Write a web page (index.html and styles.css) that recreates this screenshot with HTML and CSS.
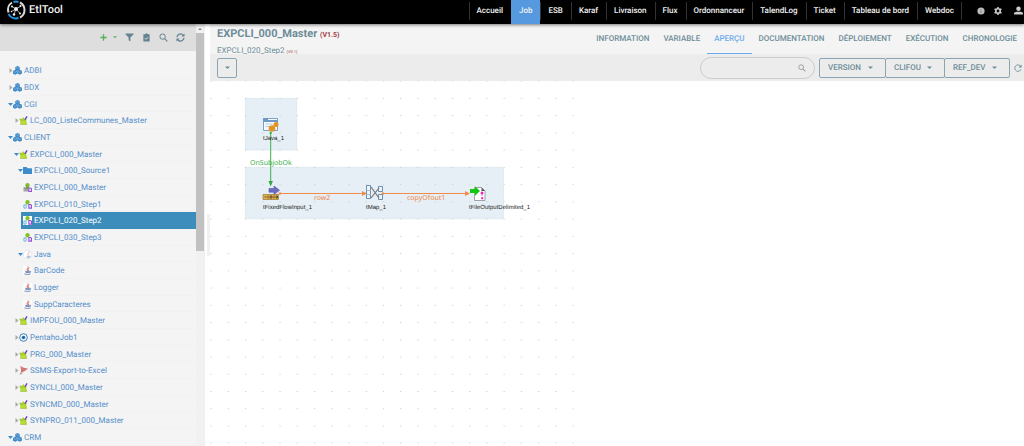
FILE: index.html
```html
<!DOCTYPE html>
<html lang="fr">
<head>
<meta charset="utf-8">
<title>EtlTool</title>
<link rel="stylesheet" href="styles.css">
</head>
<body>
<svg class="sprite" aria-hidden="true">
  <symbol id="cubes" viewBox="0 0 20 20"><g fill="#3f8ac8"><path d="M10 0l5 2.300v6L10 11 5 8.300v-6z"/><path d="M5 8.500l5 2.300v6L5 19.500 0 17v-6z"/><path d="M15 8.500l5 2.300v6l-5 2.700-5-2.700v-6z"/></g><path d="M6 3l4 2 4-2M1 12l4 2 4-2M11 12l4 2 4-2" fill="none" stroke="#b4d2ec" stroke-width="1"/></symbol>
  <symbol id="job" viewBox="0 0 20 20"><path d="M1 6h6l2-4 3 4h5l-1 5 2 8H3V12z" fill="#a9cf2e"/><path d="M5 12h9v5H5z" fill="#bfe03c"/><path d="M1 7l4 1M3 19h14" stroke="#8fb53a" stroke-width="1.200"/><path d="M13 8l5-7" fill="none" stroke="#6238d4" stroke-width="3"/></symbol>
  <symbol id="step" viewBox="0 0 20 20"><path d="M10 5L4 14M10 5l6 9" stroke="#9ab" stroke-width="1.500"/><circle cx="10" cy="5" r="4.800" fill="#7ec51e"/><path d="M2 11h5v7H2z" fill="#eaf7ff" stroke="#5ba8e0" stroke-width="1.800"/><path d="M13 10h4l2 2v6h-6z" fill="#eee0ff" stroke="#9250dc" stroke-width="2.400"/></symbol>
  <symbol id="stepgrey" viewBox="0 0 20 20"><path d="M1 9h12v10H1z" fill="#aaa"/><path d="M3 12h8M3 15h8" stroke="#888"/><circle cx="10" cy="5" r="4.800" fill="#7bbd2b"/><path d="M7 8h6v5H7z" fill="#6f9f42"/><path d="M13 11h4l2 2v6h-6z" fill="#eee0ff" stroke="#9250dc" stroke-width="2.400"/></symbol>
  <symbol id="java" viewBox="0 0 20 20"><path d="M0 0h20v20H0z" fill="#fff" opacity=".7"/><path d="M11 1c3 3-5 5-1 10M14 4c-4 2-3 4-1 7" fill="none" stroke="#d8574c" stroke-width="1.900"/><path d="M5 12h10M6 14.500h8M3 17.500c4 1.500 10 1.500 14 0M15 12c4-1 3 3-1 3" fill="none" stroke="#5272ac" stroke-width="1.800"/></symbol>
  <symbol id="cup" viewBox="0 0 20 20"><circle cx="10" cy="10" r="9" fill="#fff" stroke="#ccd" stroke-width=".8"/><path d="M13 3c3 4-5 5-1 9" fill="none" stroke="#e0776f" stroke-width="1.400"/><path d="M8 14h9M9 17h6" stroke="#7690be" stroke-width="1.500"/></symbol>
  <symbol id="pentaho" viewBox="0 0 20 20"><circle cx="10" cy="10" r="8.500" fill="#eef7ff" stroke="#2d76ae" stroke-width="2"/><circle cx="10" cy="10" r="4" fill="#2d76ae"/><circle cx="10" cy="10" r="1.500" fill="#174e80"/></symbol>
  <symbol id="ssms" viewBox="0 0 20 20"><path d="M3 0l7 4 10 2-7 5-7 3-4 6 3-10z" fill="#cf6a66"/><path d="M5 2l5 7 8-2" stroke="#e6a8a5" stroke-width="1" fill="none"/><path d="M1 19l8-4" stroke="#999" stroke-width="1.500"/></symbol>
  <symbol id="folder" viewBox="0 0 20 20"><path d="M0 3q0-1 1-1h7l2 3h9q1 0 1 1v11q0 1-1 1H1q-1 0-1-1z" fill="#3f8ccc"/></symbol>
  <symbol id="right" viewBox="0 0 10 10"><path d="M3 0l6 5-6 5z" fill="#aaa"/></symbol>
  <symbol id="down" viewBox="0 0 10 10"><path d="M0 2h10L5 8z" fill="#3f8ccc"/></symbol>
  <symbol id="caret" viewBox="0 0 10 10"><path d="M0 3h10L5 8z" fill="currentColor"/></symbol>
  <symbol id="search" viewBox="0 0 20 20"><circle cx="8" cy="8" r="6" fill="none" stroke="currentColor" stroke-width="2.200"/><path d="M12.500 12.500l6 6" stroke="currentColor" stroke-width="2.600"/></symbol>
</svg>

<header class="topbar">
  <a class="brand" href="#">
    <svg class="logo" viewBox="0 0 40 40" aria-hidden="true"><g fill="none" stroke-width="4"><path d="M5 25A17 17 0 0 1 12 5" stroke="#d8d8d8"/><path d="M15 4a17 17 0 0 1 10 0" stroke="#2196e0"/><path d="M28 5a17 17 0 0 1 0 30" stroke="#d8d8d8"/><path d="M25 36A17 17 0 0 1 5 28" stroke="#2196e0"/></g><path d="M20 18l-8-5M20 18l10-6M20 18l-4 11M20 18l8 9M20 18l-9 5" stroke="#ddd" stroke-width="1.500"/><g fill="#eee"><circle cx="20" cy="18" r="4"/><circle cx="12" cy="13" r="2"/><circle cx="29" cy="12" r="2"/><circle cx="16" cy="29" r="2.500"/><circle cx="28" cy="27" r="2"/><circle cx="11" cy="23" r="1.500"/></g></svg>
    <span>EtlTool</span>
  </a>
  <nav class="menu">
    <a href="#">Accueil</a><a href="#" class="active">Job</a><a href="#">ESB</a><a href="#">Karaf</a><a href="#">Livraison</a><a href="#">Flux</a><a href="#">Ordonnanceur</a><a href="#">TalendLog</a><a href="#">Ticket</a><a href="#">Tableau de bord</a><a href="#">Webdoc</a>
  </nav>
  <div class="user-tools">
    <button aria-label="Informations"><svg viewBox="0 0 20 20"><circle cx="10" cy="10" r="9" fill="#bbb"/><path d="M10 5v2M10 9v6" stroke="#777" stroke-width="2"/></svg></button>
    <button aria-label="Paramètres"><svg viewBox="0 0 20 20"><circle cx="10" cy="10" r="5.500" fill="none" stroke="#ccc" stroke-width="4"/><path d="M10 0v4M10 16v4M1.500 5l3.500 2M15 13l3.500 2M1.500 15L5 13M15 7l3.500-2" stroke="#ccc" stroke-width="4"/></svg></button>
    <button class="account" aria-label="Compte"><svg viewBox="0 0 20 20"><circle cx="10" cy="6" r="5" fill="#ccc"/><path d="M0 19v-3c0-4 20-4 20 0v3z" fill="#ccc"/></svg></button>
  </div>
</header>

<div class="workspace">
  <aside class="sidebar">
    <div class="side-body">
      <div class="side-tools">
        <button class="add" aria-label="Ajouter"><svg viewBox="0 0 20 20"><path d="M10 3v14M3 10h14" stroke="currentColor" stroke-width="3"/></svg><svg class="tiny"><use href="#caret"/></svg></button>
        <button aria-label="Filtrer"><svg viewBox="0 0 20 20"><path d="M1 1h18v2l-7 7v9l-4-3v-6L1 3z" fill="currentColor"/></svg></button>
        <button aria-label="Valider"><svg viewBox="0 0 20 20"><path d="M3 3h4q3-5 6 0h4v16H3z" fill="currentColor"/><path d="M6 11l3 3 5-5" fill="none" stroke="#dedede" stroke-width="2"/></svg></button>
        <button aria-label="Rechercher"><svg><use href="#search"/></svg></button>
        <button aria-label="Actualiser"><svg viewBox="0 0 20 20"><path d="M2 9a8 8 0 0 1 14-4M18 11a8 8 0 0 1-14 4" fill="none" stroke="currentColor" stroke-width="2.600"/><path d="M19 1v7h-7zM1 19v-7h7z" fill="currentColor"/></svg></button>
      </div>
      <ul class="tree">
        <li class="l1"><a href="#"><svg class="tw"><use href="#right"/></svg><svg><use href="#cubes"/></svg><span>ADBI</span></a></li>
        <li class="l1"><a href="#"><svg class="tw"><use href="#right"/></svg><svg><use href="#cubes"/></svg><span>BDX</span></a></li>
        <li class="l1"><a href="#"><svg class="tw"><use href="#down"/></svg><svg><use href="#cubes"/></svg><span>CGI</span></a></li>
        <li class="l2"><a href="#"><svg class="tw"><use href="#right"/></svg><svg><use href="#job"/></svg><span>LC_000_ListeCommunes_Master</span></a></li>
        <li class="l1"><a href="#"><svg class="tw"><use href="#down"/></svg><svg><use href="#cubes"/></svg><span>CLIENT</span></a></li>
        <li class="l2"><a href="#"><svg class="tw"><use href="#down"/></svg><svg><use href="#job"/></svg><span>EXPCLI_000_Master</span></a></li>
        <li class="l3"><a href="#"><svg class="tw"><use href="#down"/></svg><svg><use href="#folder"/></svg><span>EXPCLI_000_Source1</span></a></li>
        <li class="l4"><a href="#"><svg><use href="#stepgrey"/></svg><span>EXPCLI_000_Master</span></a></li>
        <li class="l4"><a href="#"><svg><use href="#step"/></svg><span>EXPCLI_010_Step1</span></a></li>
        <li class="l4 selected"><a href="#"><svg><use href="#step"/></svg><span>EXPCLI_020_Step2</span></a></li>
        <li class="l4"><a href="#"><svg><use href="#step"/></svg><span>EXPCLI_030_Step3</span></a></li>
        <li class="l3"><a href="#"><svg class="tw"><use href="#down"/></svg><svg><use href="#cup"/></svg><span>Java</span></a></li>
        <li class="l4"><a href="#"><svg><use href="#java"/></svg><span>BarCode</span></a></li>
        <li class="l4"><a href="#"><svg><use href="#java"/></svg><span>Logger</span></a></li>
        <li class="l4"><a href="#"><svg><use href="#java"/></svg><span>SuppCaracteres</span></a></li>
        <li class="l2"><a href="#"><svg class="tw"><use href="#right"/></svg><svg><use href="#job"/></svg><span>IMPFOU_000_Master</span></a></li>
        <li class="l2"><a href="#"><svg class="tw"><use href="#right"/></svg><svg><use href="#pentaho"/></svg><span>PentahoJob1</span></a></li>
        <li class="l2"><a href="#"><svg class="tw"><use href="#right"/></svg><svg><use href="#job"/></svg><span>PRG_000_Master</span></a></li>
        <li class="l2"><a href="#"><svg class="tw"><use href="#right"/></svg><svg><use href="#ssms"/></svg><span>SSMS-Export-to-Excel</span></a></li>
        <li class="l2"><a href="#"><svg class="tw"><use href="#right"/></svg><svg><use href="#job"/></svg><span>SYNCLI_000_Master</span></a></li>
        <li class="l2"><a href="#"><svg class="tw"><use href="#right"/></svg><svg><use href="#job"/></svg><span>SYNCMD_000_Master</span></a></li>
        <li class="l2"><a href="#"><svg class="tw"><use href="#right"/></svg><svg><use href="#job"/></svg><span>SYNPRO_011_000_Master</span></a></li>
        <li class="l1"><a href="#"><svg class="tw"><use href="#down"/></svg><svg><use href="#cubes"/></svg><span>CRM</span></a></li>
      </ul>
    </div>
    <div class="scrollbar"><svg viewBox="0 0 8 9"><path d="M2 6h4L4 4z" fill="#888"/></svg><div class="thumb"></div></div>
  </aside>
  <div class="splitter"><span></span></div>

  <main class="content">
    <div class="page-head">
      <div class="titles">
        <h1>EXPCLI_000_Master <small>(V1.5)</small></h1>
        <h2>EXPCLI_020_Step2 <small>(V0.1)</small></h2>
      </div>
      <nav class="tabs">
        <a href="#">INFORMATION</a><a href="#">VARIABLE</a><a href="#" class="active">APERÇU</a><a href="#">DOCUMENTATION</a><a href="#">DÉPLOIEMENT</a><a href="#">EXÉCUTION</a><a href="#">CHRONOLOGIE</a>
      </nav>
    </div>
    <div class="toolbar">
      <button class="more" aria-label="Actions"><svg><use href="#caret"/></svg></button>
      <label class="search"><input type="text" aria-label="Rechercher"><svg><use href="#search"/></svg></label>
      <div class="filters">
        <label class="pick"><select aria-label="Version"><option>VERSION</option></select><svg><use href="#caret"/></svg></label>
        <label class="pick"><select aria-label="Client"><option>CLIFOU</option></select><svg><use href="#caret"/></svg></label>
        <label class="pick"><select aria-label="Référence"><option>REF_DEV</option></select><svg><use href="#caret"/></svg></label>
      </div>
      <button class="reload" aria-label="Recharger"><svg viewBox="0 0 20 20"><path d="M16 5a8 8 0 1 0 1.500 8" fill="none" stroke="currentColor" stroke-width="2.200"/><path d="M19 1v8h-8z" fill="currentColor"/></svg></button>
    </div>
    <div class="canvas">
      <svg class="diagram" width="364" height="365" viewBox="210 81 364 365">
        <defs>
          <pattern id="dots" x="210.500" y="80.700" width="17.240" height="17.240" patternUnits="userSpaceOnUse"><path d="M0 0h1.200v1H0z" fill="#c9cdd0"/></pattern>
        </defs>
        <g fill="#e6eff5" stroke="#d5e2ea" stroke-width=".6"><path d="M245.300 98.300h51.400v51.700h-51.400z"/><path d="M245.300 167.300h258.200v51.500H245.300z"/></g>
        <path d="M210 81h364v365H210z" fill="url(#dots)"/>
        <g stroke="#f08b4b"><path d="M280 193.500h84M383 193.500h85"/></g>
        <g fill="#f08b4b"><path d="M362 191l5 2.500-5 2.500zM465 191l5 2.500-5 2.500z"/><circle cx="280" cy="193.500" r="1.300"/><circle cx="383" cy="193.500" r="1.300"/></g>

        <g><path d="M263.500 118.500h14v12h-14z" fill="#f6faff" stroke="#7da0c6"/><path d="M263 118h5v2h10v2h-15z" fill="#6d98c8"/><path d="M265.500 124h7M265.500 126.500h5" stroke="#b4cbe2"/><circle cx="272" cy="128.500" r="3.300" fill="#e39320"/><circle cx="276" cy="124.500" r="2.500" fill="#e39320"/></g>
        <path d="M270.700 133v50" stroke="#3fb14d"/><path d="M268.500 181h4.400l-2.200 5.500z" fill="#2fa83f"/><circle cx="270.700" cy="133" r="1.200" fill="#3fb14d"/>

        <g><path d="M269 188.500h5V186l5.500 4.300-5.500 4.300v-2.400h-5z" fill="#6c6cc4" stroke="#5656a8" stroke-width=".6"/><path d="M263 194.500h15.500v5H263z" fill="#e3b350" stroke="#8d6728" stroke-width=".6"/><path d="M264.500 197h2M268 195.500v3M270 196h2v2h-2zM274 195.500v3M276 196h1.500v2H276z" fill="none" stroke="#49351a" stroke-width=".8"/></g>

        <g fill="#edf4fa" stroke="#6b8fae"><path d="M366.500 185.500h4v13h-4zM378.500 186.500h4v5h-4zM378.500 194.500h4v5h-4z"/><path d="M366.500 190.500h4M366.500 194.500h4" stroke="#a8c0d4"/><path d="M371 187l8 11M371 198l8-10" fill="none" stroke="#777" stroke-width="1.200"/></g>

        <g><path d="M474.500 187.500h7l3.500 3.500v9.500h-10.500z" fill="#fff" stroke="#8a8a96" stroke-width=".8"/><path d="M481.500 187.500v3.500h3.500z" fill="#555"/><path d="M481 192h2v2h-2zM481 195h2M481.500 197.500h1.500v1.500h-1.500z" stroke="#ef22bd" fill="#ef22bd" stroke-width=".6"/><path d="M470 189h5v-2.700l5 4.700-5 4.700V193h-5z" fill="#12c812"/></g>

        <g class="node-label"><text x="263" y="140">tJava_1</text><text x="263" y="209">tFixedFlowInput_1</text><text x="366" y="209">tMap_1</text><text x="469" y="209">tFileOutputDelimited_1</text></g>
        <g class="link-label"><text class="ok" x="250" y="165">OnSubjobOk</text><text x="314" y="200">row2</text><text x="407" y="200">copyOfout1</text></g>
      </svg>
    </div>
  </main>
</div>
</body>
</html>
```

FILE: styles.css
```css
* { box-sizing: border-box; }
html, body { height: 100%; }
body {
  margin: 0;
  display: flex;
  flex-direction: column;
  overflow: hidden;
  background: #fff;
  color: #6d8c98;
  font: 8px/16px Roboto, "Noto Sans", sans-serif;
  text-rendering: geometricPrecision;
}
a { color: inherit; text-decoration: none; }
button { display: flex; align-items: center; justify-content: center; border: 0; padding: 0; background: none; color: inherit; }
svg { flex: none; width: 9px; height: 9px; }
.sprite { position: absolute; width: 0; height: 0; }

.topbar {
  position: relative;
  z-index: 2;
  display: flex;
  align-items: stretch;
  height: 24px;
  flex: none;
  background: #000;
  color: #f2f2f2;
  box-shadow: 0 1px 3px rgba(0, 0, 0, .5);
}
.brand { display: flex; align-items: center; gap: 3px; margin: 0 auto 4px 6px; font-size: 11px; font-weight: 500; }
.logo { width: 20px; height: 20px; }
.menu { display: flex; font-weight: 500; line-height: 21px; }
.menu a { position: relative; padding: 0 8px; }
.menu a::before, .menu a:last-child::after { content: ""; position: absolute; left: 0; top: 2px; bottom: 4px; width: 1px; background: #333; }
.menu a:last-child::after { left: auto; right: 0; }
.menu .active { background: #5699df; }
.menu .active::before { display: none; }
.user-tools { display: flex; align-items: center; gap: 9px; padding: 0 1px 3px 15px; }
.user-tools svg { width: 8px; height: 8px; }
.user-tools .account { margin-left: 3px; }
.user-tools .account svg { width: 9px; height: 9px; }

.workspace { display: flex; flex: 1; min-height: 0; }
.sidebar { display: flex; flex: none; width: 204px; background: #f4f4f4; }
.side-body { flex: 1; overflow: hidden; }
.side-tools { display: flex; align-items: center; justify-content: flex-end; gap: 8px; height: 27px; padding: 0 11px 1px 0; background: #dedede; color: #638391; }
.side-tools .add { gap: 5px; color: #59b159; }
.side-tools svg { width: 9px; height: 9px; }
.side-tools svg.tiny { width: 4px; height: 4px; }
.tree { margin: 11px 0 0; padding: 0; list-style: none; color: #558fca; }
.tree li { height: 17px; border-bottom: 1px solid #f1f1f1; }
.tree li:nth-child(3n) { height: 16px; }
.tree a { display: flex; align-items: center; height: 17px; line-height: 17px; }
.tree span { margin-left: 2px; }
.tree .tw { width: 5px; height: 5px; }
.l1 { margin-left: 8px; }
.l2 { margin-left: 14px; }
.l3 { margin-left: 18px; }
.l4 { margin-left: 21px; padding-left: 2px; }
.tree .selected { border-color: #3c8dbc; background: #3c8dbc; color: #fff; }
.selected svg { background: #fff; }
.scrollbar { width: 8px; background: #f1f1f1; }
.scrollbar svg { display: block; width: 8px; height: 9px; }
.thumb { height: 218px; background: #c1c1c1; }
.splitter { display: flex; align-items: center; justify-content: flex-end; flex: none; width: 6px; border-left: 1px solid #eee; }
.splitter span { width: 3px; height: 42px; background: #f0f0f0; }

.content { display: flex; flex: 1; flex-direction: column; min-width: 0; }
.page-head { display: flex; justify-content: space-between; flex: none; height: 30px; padding: 0 0 0 7px; background: #f4f4f4; }
.titles { white-space: nowrap; }
h1, h2 { margin: 0; font-weight: 400; }
h1 { font-size: 11px; line-height: 19px; font-weight: 700; }
h2 { font-size: 8px; line-height: 11px; }
small { color: #a03c46; }
h1 small { font-size: 7px; }
h2 small { font-size: 4px; }
.tabs { display: flex; font-weight: 500; line-height: 29px; }
.tabs a { padding: 0 7px; border-bottom: 1px solid transparent; white-space: nowrap; }
.tabs .active { border-color: #6eabee; color: #6eabee; }
.toolbar { display: flex; align-items: center; flex: none; height: 27px; padding: 0 2px 0 7px; background: #ececec; }
.more { width: 20px; height: 20px; border: 1px solid #8aa5b1; border-radius: 2px; }
.more svg { width: 5px; height: 5px; }
.search { display: flex; align-items: center; width: 115px; height: 22px; margin-left: auto; margin-right: 4px; padding: 0 8px; border: 1px solid #ccc; border-radius: 11px; color: #999; }
.search input { flex: 1; min-width: 0; height: 16px; border: 0; padding: 0; background: none; font: inherit; outline: none; }
.search svg { width: 8px; height: 8px; }
.filters { display: flex; }
.pick { display: grid; align-items: center; height: 20px; border: 1px solid #8aa5b1; border-radius: 2px; font-weight: 500; }
.pick + .pick { margin-left: -1px; }
.pick select { grid-area: 1 / 1; appearance: none; height: 18px; border: 0; padding: 0 23px 0 8px; background: none; color: inherit; font: inherit; text-rendering: inherit; }
.pick svg { grid-area: 1 / 1; justify-self: end; width: 5px; height: 5px; margin-right: 12px; pointer-events: none; }
.reload { margin-left: 4px; }
.reload svg { width: 8px; height: 8px; }

.canvas { flex: 1; min-height: 0; overflow: hidden; }
.diagram { display: block; width: 364px; height: 365px; }
.node-label { fill: #222; font: 6px "Liberation Sans", Arial, sans-serif; }
.link-label { fill: #ec8848; font: 7px "Noto Sans", sans-serif; }
.link-label .ok { fill: #3fb14d; }
```
